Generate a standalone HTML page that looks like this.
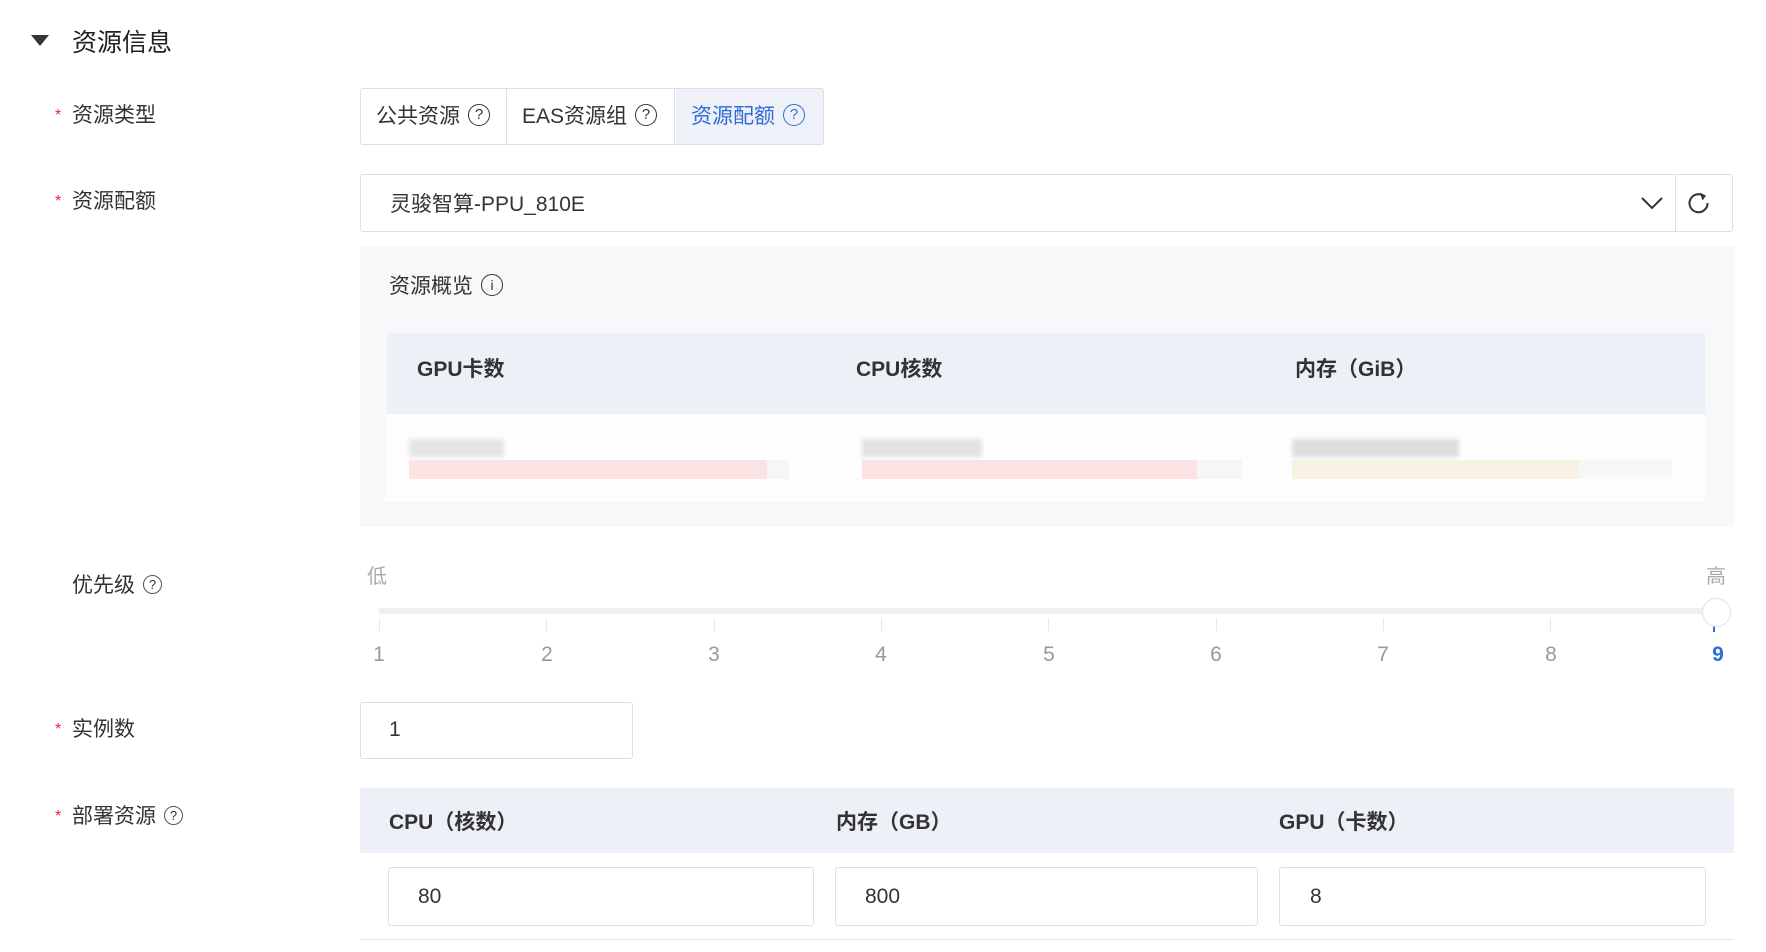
<!DOCTYPE html>
<html><head><meta charset="utf-8"><style>
body{margin:0;width:1766px;height:952px;background:#fff;font-family:"Liberation Sans","Noto Sans CJK SC",sans-serif;color:#333;position:relative;overflow:hidden}
.a{position:absolute;white-space:nowrap}
.lb{font-size:21px;color:#333;line-height:24px}
.st{color:#e23;font-size:16px;position:absolute;left:-17px;top:0}
.q{display:inline-block;width:20px;height:20px;border:1.8px solid #333;border-radius:50%;font-size:15px;line-height:20px;text-align:center;vertical-align:middle;margin-left:8px;font-weight:normal;position:relative;top:-2px}
.box{position:absolute;border:1px solid #dcdfe4;border-radius:3px;background:#fff;box-sizing:border-box}
.hd{font-size:21px;font-weight:bold;color:#333}
.num{font-size:21px;color:#999;transform:translateX(-50%)}
.tick{position:absolute;top:618px;width:1px;height:13px;background:#e6e6e6}
.v{font-size:21px;color:#333}
</style></head><body>
<div class="a" style="left:31px;top:35px;width:0;height:0;border-left:9px solid transparent;border-right:9px solid transparent;border-top:11px solid #333"></div>
<div class="a" style="left:72px;top:23px;font-size:25px;color:#222">资源信息</div>

<div class="a lb" style="left:72px;top:104px"><span class="st">*</span>资源类型</div>
<div class="box" style="left:360px;top:88px;width:464px;height:57px;border-radius:3px;overflow:hidden">
 <div class="a" style="left:0;top:0;width:146px;height:55px;border-right:1px solid #dcdfe4;font-size:21px;line-height:55px;padding-left:15px;box-sizing:border-box">公共资源<span class="q">?</span></div>
 <div class="a" style="left:146px;top:0;width:168px;height:55px;border-right:1px solid #dcdfe4;font-size:21px;line-height:55px;padding-left:15px;box-sizing:border-box">EAS资源组<span class="q">?</span></div>
 <div class="a" style="left:315px;top:0;width:149px;height:55px;background:#eef2f8;color:#2f6bd9;font-size:21px;line-height:55px;padding-left:15px;box-sizing:border-box">资源配额<span class="q" style="border-color:#2f6bd9">?</span></div>
</div>

<div class="a lb" style="left:72px;top:190px"><span class="st">*</span>资源配额</div>
<div class="box" style="left:360px;top:174px;width:1373px;height:58px">
 <div class="a" style="left:29px;top:13px;font-size:21px;color:#333">灵骏智算-PPU_810E</div>
 <svg class="a" style="left:1279px;top:18px" width="24" height="20" viewBox="0 0 24 20"><path d="M2 5 L12 15 L22 5" fill="none" stroke="#333" stroke-width="2"/></svg>
 <div class="a" style="left:1314px;top:0;width:1px;height:56px;background:#dcdfe4"></div>
 <svg class="a" style="left:1324px;top:14px" width="28" height="28" viewBox="0 0 28 28"><path d="M19.5 7.5 A9 9 0 1 0 22.5 14" fill="none" stroke="#333" stroke-width="2"/><path d="M15 4 L21 6.5 L17.5 11.5 Z" fill="#333"/></svg>
</div>

<div class="a" style="left:360px;top:246px;width:1374px;height:281px;background:#f6f8fa"></div>
<div class="a" style="left:389px;top:270px;font-size:21px;color:#333">资源概览<span class="q" style="font-size:14px">i</span></div>
<div class="a" style="left:387px;top:333px;width:1318px;height:81px;background:#edf1f7"></div>
<div class="a hd" style="left:417px;top:353px">GPU卡数</div>
<div class="a hd" style="left:856px;top:353px">CPU核数</div>
<div class="a hd" style="left:1295px;top:353px">内存（GiB）</div>
<div class="a" style="left:385px;top:414px;width:1320px;height:88px;background:#fdfdfd"></div>
<div class="a" style="left:409px;top:439px;width:95px;height:18px;background:#e4e4e4;filter:blur(2px)"></div>
<div class="a" style="left:409px;top:460px;width:380px;height:19px;background:#f6f6f6"></div>
<div class="a" style="left:409px;top:460px;width:358px;height:19px;background:#fbe3e3"></div>
<div class="a" style="left:862px;top:439px;width:120px;height:18px;background:#e2e2e2;filter:blur(2px)"></div>
<div class="a" style="left:862px;top:460px;width:380px;height:19px;background:#f6f6f6"></div>
<div class="a" style="left:862px;top:460px;width:335px;height:19px;background:#fbe3e3"></div>
<div class="a" style="left:1292px;top:439px;width:167px;height:18px;background:#dedede;filter:blur(2px)"></div>
<div class="a" style="left:1292px;top:460px;width:380px;height:19px;background:#f7f7f7"></div>
<div class="a" style="left:1292px;top:460px;width:287px;height:19px;background:#f8f2e2"></div>

<div class="a lb" style="left:72px;top:574px">优先级<span class="q" style="width:17px;height:17px;line-height:17px;font-size:13px;border-color:#555">?</span></div>
<div class="a" style="left:367px;top:560px;font-size:20px;color:#aaa">低</div>
<div class="a" style="left:1706px;top:560px;font-size:20px;color:#aaa">高</div>
<div class="a" style="left:378px;top:608px;width:1338px;height:6px;background:#f0f0f0;border-radius:3px"></div>
<div class="tick" style="left:379px"></div><div class="tick" style="left:546px"></div><div class="tick" style="left:714px"></div><div class="tick" style="left:881px"></div><div class="tick" style="left:1048px"></div><div class="tick" style="left:1216px"></div><div class="tick" style="left:1383px"></div><div class="tick" style="left:1550px"></div>
<div class="a" style="left:1713px;top:620px;width:2px;height:12px;background:#2f6bd9"></div>
<div class="a" style="left:1702px;top:598px;width:29px;height:29px;border-radius:50%;background:#fff;border:1px solid #e3e3e3;box-sizing:border-box"></div>
<div class="a num" style="left:379px;top:643px">1</div><div class="a num" style="left:547px;top:643px">2</div><div class="a num" style="left:714px;top:643px">3</div><div class="a num" style="left:881px;top:643px">4</div><div class="a num" style="left:1049px;top:643px">5</div><div class="a num" style="left:1216px;top:643px">6</div><div class="a num" style="left:1383px;top:643px">7</div><div class="a num" style="left:1551px;top:643px">8</div>
<div class="a num" style="left:1718px;top:643px;color:#2f6bd9;font-weight:bold">9</div>

<div class="a lb" style="left:72px;top:718px"><span class="st">*</span>实例数</div>
<div class="box" style="left:360px;top:702px;width:273px;height:57px"><div class="a v" style="left:28px;top:15px">1</div></div>

<div class="a lb" style="left:72px;top:805px"><span class="st">*</span>部署资源<span class="q" style="width:17px;height:17px;line-height:17px;font-size:13px;border-color:#555">?</span></div>
<div class="a" style="left:360px;top:788px;width:1374px;height:65px;background:#edf1f7"></div>
<div class="a hd" style="left:389px;top:806px">CPU（核数）</div>
<div class="a hd" style="left:836px;top:806px">内存（GB）</div>
<div class="a hd" style="left:1279px;top:806px">GPU（卡数）</div>
<div class="box" style="left:388px;top:867px;width:426px;height:59px"><div class="a v" style="left:29px;top:17px">80</div></div>
<div class="box" style="left:835px;top:867px;width:423px;height:59px"><div class="a v" style="left:29px;top:17px">800</div></div>
<div class="box" style="left:1279px;top:867px;width:427px;height:59px"><div class="a v" style="left:30px;top:17px">8</div></div>
<div class="a" style="left:360px;top:939px;width:1374px;height:1px;background:#e6e6e6"></div>
</body></html>
